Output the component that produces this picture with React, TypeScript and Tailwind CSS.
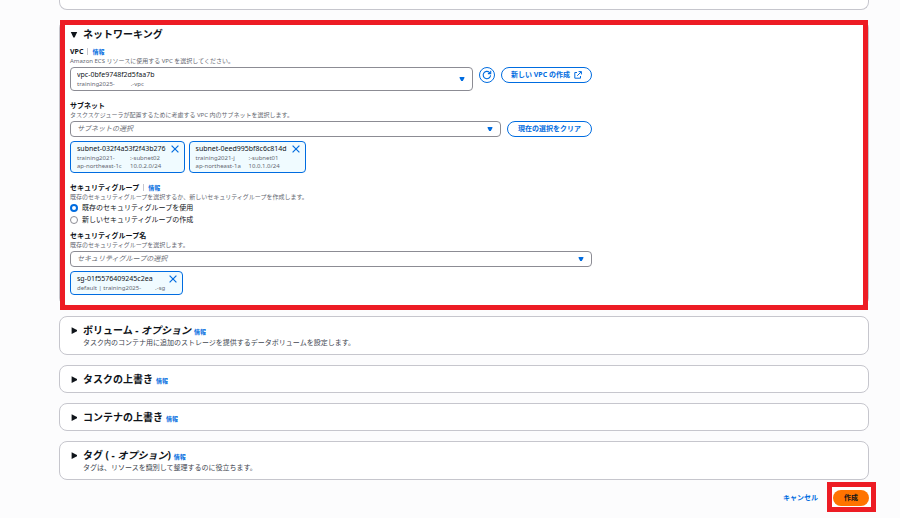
import { useState, type ReactNode } from "react";

function InfoLink() {
  return (
    <a href="#info" className="text-[6px] font-bold text-[#006ce0]">
      情報
    </a>
  );
}

function Triangle({ open = false }: { open?: boolean }) {
  return (
    <svg viewBox="0 0 8 8" className="size-2 shrink-0 fill-current" aria-hidden="true">
      {open ? <path d="M.8 2h6.4L4.6 7.6H3.4z" /> : <path d="M1.6 1.2v6.8L7 5.2V4z" />}
    </svg>
  );
}

function Caret() {
  return (
    <svg
      viewBox="0 0 6 6"
      className="pointer-events-none mr-2 size-[6px] self-center justify-self-end fill-[#006ce0] [grid-area:1/1]"
      aria-hidden="true"
    >
      <path d="M.6 1h4.8v1L3.8 5H2.2L.6 2z" />
    </svg>
  );
}

function CloseIcon() {
  return (
    <svg viewBox="0 0 8 8" className="size-2 stroke-[#006ce0]" aria-hidden="true">
      <path d="M.6.6l6.8 6.8M7.4.6L.6 7.4" strokeWidth="1.2" fill="none" />
    </svg>
  );
}

function RefreshIcon() {
  return (
    <svg viewBox="0 0 10 10" className="size-[10px]" fill="none" stroke="currentColor" strokeWidth="1.1" aria-hidden="true">
      <path d="M8.6 5.2A3.7 3.7 0 1 1 7.4 2.3L8.5 3.4" />
      <path d="M8.7.8v2.8H5.9" />
    </svg>
  );
}

function ExternalIcon() {
  return (
    <svg viewBox="0 0 8 8" className="size-2" fill="none" stroke="currentColor" strokeWidth="1" aria-hidden="true">
      <path d="M3 1.5H.8v5.7h5.7V5M4.6.6h2.8v2.8M7.2.8L3.2 4.8" />
    </svg>
  );
}

function Label({ id, info = false, children }: { id: string; info?: boolean; children: ReactNode }) {
  return (
    <div className="flex h-[10px] items-center gap-1 text-[7px] leading-[12px]">
      <label htmlFor={id} className="pt-px font-bold">
        {children}
      </label>
      {info && (
        <>
          <span className="h-[7px] w-px bg-[#c6c6cd]" />
          <span className="flex pt-px">
            <InfoLink />
          </span>
        </>
      )}
    </div>
  );
}

function Help({ children }: { children: ReactNode }) {
  return <p className="text-[6px] leading-[10px] text-[#656871]">{children}</p>;
}

function Picker({ id, placeholder }: { id: string; placeholder: string }) {
  return (
    <div className="grid min-w-0 grow">
      <select
        id={id}
        className="h-4 w-full appearance-none rounded border border-[#8c8c94] bg-white px-[6px] text-[7px] leading-[14px] text-[#656871] italic [grid-area:1/1]"
      >
        <option>{placeholder}</option>
      </select>
      <Caret />
    </div>
  );
}

function Token({ title, children }: { title: string; children: ReactNode }) {
  return (
    <div className="min-w-[113px] rounded border border-[#006ce0] bg-[#f0fbff] px-[6px] pt-[2px] pb-[2px]">
      <div className="flex items-center justify-between gap-[5px]">
        <span className="text-[7px] leading-[10px]">{title}</span>
        <button type="button" aria-label={`${title} を削除`} className="-mr-px">
          <CloseIcon />
        </button>
      </div>
      <div className="text-[6px] leading-[8px] text-[#656871]">{children}</div>
    </div>
  );
}

const outlineButton =
  "flex h-4 shrink-0 items-center justify-center gap-1 rounded-full border border-[#006ce0] bg-white text-[7px] font-bold text-[#006ce0]";

const card = "rounded-lg border border-[#c6c6cd] bg-white px-[10px]";

function Section({ title, option, close, description }: { title: string; option?: string; close?: string; description?: string }) {
  return (
    <section className={`${card} py-[6px]`}>
      <div className="flex items-center gap-[3px]">
        <h2 className="text-[10px] leading-[14px] font-bold">
          <button type="button" aria-expanded="false" className="flex items-center gap-[5px]">
            <Triangle />
            <span>
              {title}
              {option && <em>{option}</em>}
              {close}
            </span>
          </button>
        </h2>
        <span className="flex pt-[3px] leading-[10px]">
          <InfoLink />
        </span>
      </div>
      {description && <p className="pl-[13px] text-[7px] leading-[11px] text-[#424650]">{description}</p>}
    </section>
  );
}

export default function App() {
  const [mode, setMode] = useState("existing");
  const radio =
    "size-2 appearance-none rounded-full border border-[#8c8c94] bg-white checked:border-2 checked:border-[#006ce0]";

  return (
    <main className="min-h-screen bg-[#fcfcfd] pr-[31px] pb-3 pl-[59px] font-['Noto_Sans','Noto_Sans_CJK_JP',sans-serif] text-[#0f141a]">
      <div className="flex flex-col gap-[10px]">
        <div className="h-[10px] rounded-b-lg border border-t-0 border-[#c6c6cd] bg-white" />

        <section className={`${card} relative pt-[6px] pb-[10px]`}>
          <h2 className="text-[10px] leading-[14px] font-bold">
            <button type="button" aria-expanded="true" className="flex items-center gap-[5px]">
              <Triangle open />
              ネットワーキング
            </button>
          </h2>

          <div className="mt-[5px] flex max-w-[522px] flex-col gap-[9px]">
            <div>
              <Label id="vpc" info>
                VPC
              </Label>
              <Help>Amazon ECS リソースに使用する VPC を選択してください。</Help>
              <div className="mt-px flex items-start gap-[6px]">
                <div className="grid min-w-0 grow">
                  <select
                    id="vpc"
                    className="h-6 w-full appearance-none rounded border border-[#8c8c94] bg-white px-[6px] pb-2 text-[7px] leading-[14px] [grid-area:1/1]"
                  >
                    <option>vpc-0bfe9748f2d5faa7b</option>
                  </select>
                  <span className="pointer-events-none flex gap-4 self-end pb-[3px] pl-[7px] text-[6px] leading-[8px] text-[#656871] [grid-area:1/1]">
                    <span>training2025-</span>
                    <span>.-vpc</span>
                  </span>
                  <Caret />
                </div>
                <button
                  type="button"
                  aria-label="更新"
                  className="flex size-4 shrink-0 items-center justify-center rounded-full border border-[#006ce0] bg-white text-[#006ce0]"
                >
                  <RefreshIcon />
                </button>
                <button type="button" className={`${outlineButton} w-[91px]`}>
                  新しい VPC の作成
                  <ExternalIcon />
                </button>
              </div>
            </div>

            <div>
              <Label id="subnet">サブネット</Label>
              <Help>タスクスケジューラが配置するために考慮する VPC 内のサブネットを選択します。</Help>
              <div className="mt-px flex items-start gap-[6px]">
                <Picker id="subnet" placeholder="サブネットの選択" />
                <button type="button" className={`${outlineButton} w-[85px]`}>
                  現在の選択をクリア
                </button>
              </div>
              <div className="mt-1 flex items-start gap-1">
                <Token title="subnet-032f4a53f2f43b276">
                  <div className="grid grid-cols-[53px_auto]">
                    <span>training2021-</span>
                    <span>:-subnet02</span>
                    <span>ap-northeast-1c</span>
                    <span>10.0.2.0/24</span>
                  </div>
                </Token>
                <Token title="subnet-0eed995bf8c6c814d">
                  <div className="grid grid-cols-[53px_auto]">
                    <span>training2021-j</span>
                    <span>:-subnet01</span>
                    <span>ap-northeast-1a</span>
                    <span>10.0.1.0/24</span>
                  </div>
                </Token>
              </div>
            </div>

            <div>
              <Label id="existing" info>
                セキュリティグループ
              </Label>
              <Help>既存のセキュリティグループを選択するか、新しいセキュリティグループを作成します。</Help>
              <div className="flex flex-col text-[7px] leading-[12px]">
                <label className="flex items-center gap-1">
                  <input
                    id="existing"
                    type="radio"
                    name="sg-mode"
                    className={radio}
                    checked={mode === "existing"}
                    onChange={() => setMode("existing")}
                  />
                  既存のセキュリティグループを使用
                </label>
                <label className="flex items-center gap-1">
                  <input
                    type="radio"
                    name="sg-mode"
                    className={radio}
                    checked={mode === "new"}
                    onChange={() => setMode("new")}
                  />
                  新しいセキュリティグループの作成
                </label>
              </div>
              <div className="mt-1">
                <Label id="sg">セキュリティグループ名</Label>
                <Help>既存のセキュリティグループを選択します。</Help>
                <div className="mt-px flex">
                  <Picker id="sg" placeholder="セキュリティグループの選択" />
                </div>
                <div className="mt-1 flex">
                  <Token title="sg-01f5576409245c2ea">
                    <div className="flex gap-[14px]">
                      <span>default | training2025-</span>
                      <span>.-sg</span>
                    </div>
                  </Token>
                </div>
              </div>
            </div>
          </div>
          <div className="pointer-events-none absolute inset-x-0 -top-px -bottom-[5px] border-[5px] border-[#ed1c24]" />
        </section>

        <Section
          title="ボリューム - "
          option="オプション"
          description="タスク内のコンテナ用に追加のストレージを提供するデータボリュームを設定します。"
        />
        <Section title="タスクの上書き" />
        <Section title="コンテナの上書き" />
        <Section title="タグ ( - " option="オプション" close=")" description="タグは、リソースを識別して整理するのに役立ちます。" />

        <footer className="flex items-center justify-end gap-[15px] text-[7px] font-bold">
          <button type="button" className="text-[#006ce0]">
            キャンセル
          </button>
          <div className="relative flex">
            <div className="pointer-events-none absolute -top-2 -right-[7px] -bottom-[6px] -left-[6px] border-[5px] border-[#ed1c24] bg-white" />
            <button type="button" className="relative h-4 rounded-full bg-[#ff7300] px-[11px]">
              作成
            </button>
          </div>
        </footer>
      </div>
    </main>
  );
}
